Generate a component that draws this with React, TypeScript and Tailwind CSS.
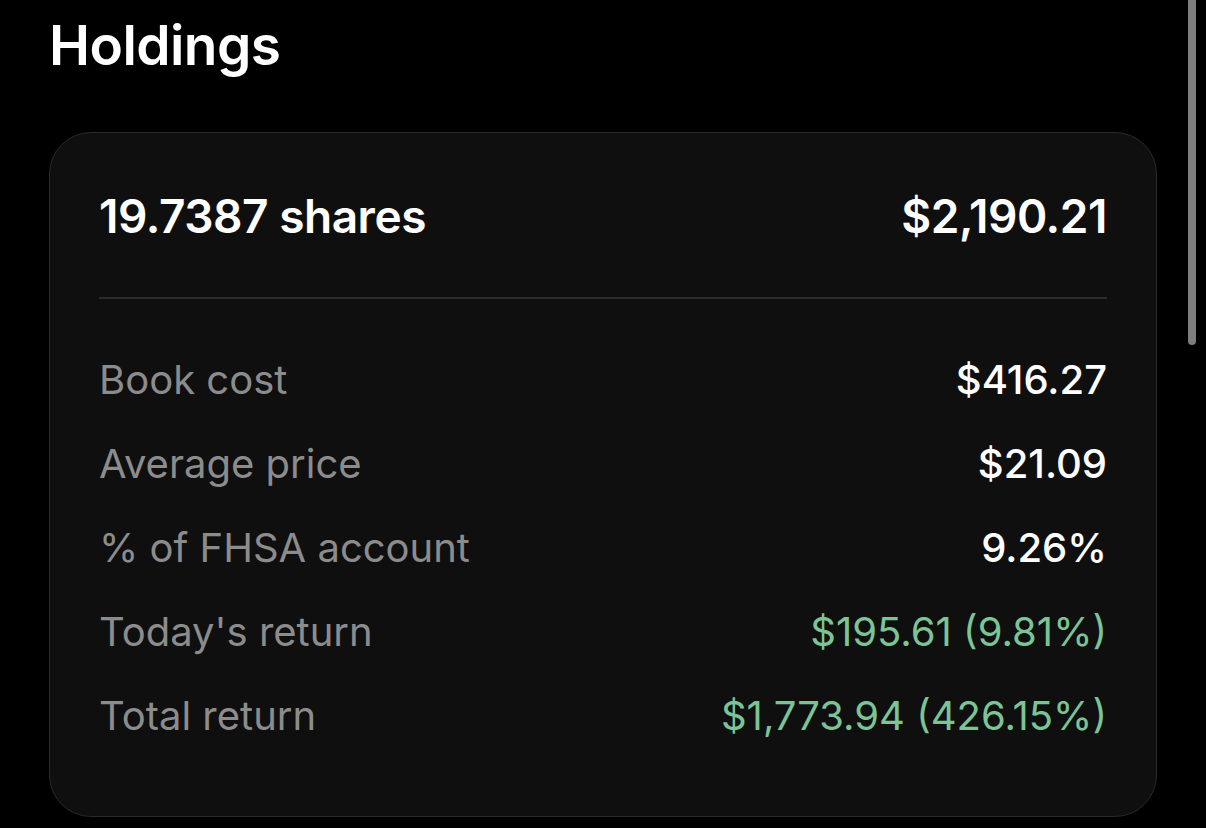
const rows = [
  { label: "Book cost", value: "$416.27", tone: "white" },
  { label: "Average price", value: "$21.09", tone: "white" },
  { label: "% of FHSA account", value: "9.26%", tone: "white" },
  { label: "Today's return", value: "$195.61 (9.81%)", tone: "green" },
  { label: "Total return", value: "$1,773.94 (426.15%)", tone: "green" },
];

export default function App() {
  return (
    <div
      className="relative min-h-[828px] w-full overflow-hidden bg-black"
      style={{ fontFamily: "Inter, 'Noto Sans', sans-serif" }}
    >
      {/* scroll thumb */}
      <div className="absolute right-[10px] top-[-10px] h-[355px] w-[8px] rounded-full bg-[#7e7e7e]" />

      <div className="px-[49px] pt-[10px]">
        <h1 className="text-[55px] font-semibold leading-[70px] tracking-[-0.01em] text-white">
          Holdings
        </h1>

        <div className="mt-[52px] w-[1108px] rounded-[42px] border border-[#2a2a2a] bg-[#0f0f0f] px-[49px] pt-[41px] pb-[58px]">
          <div className="flex h-[84px] items-center justify-between text-[46px] font-semibold tracking-[-0.01em] text-white">
            <span>19.7387 shares</span>
            <span>$2,190.21</span>
          </div>
          <div className="mt-[39px] mb-[39px] h-[2px] bg-[#2c2c2c]" />
          {rows.map((r) => (
            <div key={r.label} className="flex h-[84px] items-center justify-between text-[40px]">
              <span className="text-[#8c8c8c]">{r.label}</span>
              <span className={r.tone === "green" ? "text-[#7cc495]" : "font-medium text-white"}>{r.value}</span>
            </div>
          ))}
        </div>
      </div>
    </div>
  );
}
